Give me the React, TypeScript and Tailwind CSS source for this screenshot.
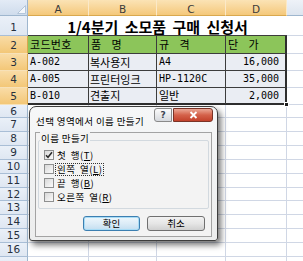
import React from "react";

const KR = "font-['Noto_Sans_CJK_KR',sans-serif]";
const MONO = "font-['DejaVu_Sans_Mono','Noto_Sans_CJK_KR',monospace]";

const colW = ["w-[61px]", "w-[68px]", "w-[69px]", "w-[61px]"];

function RowHdr({ n, sel, h, bottom }: { n: number | null; sel?: boolean; h: string; bottom?: boolean }) {
  return (
    <div
      className={`${h} w-[28px] flex-none flex justify-center border-r border-b text-[10.5px] leading-none text-[#27303d] font-['DejaVu_Sans','Liberation_Sans',sans-serif] ${
        bottom ? "items-end pb-[3px]" : "items-center"
      } ${
        sel
          ? "bg-gradient-to-b from-[#f9dca6] to-[#f3c777] border-r-[#d9a84e] border-b-[#f7e1b8]"
          : "bg-gradient-to-b from-[#eaf0f8] to-[#dfe7f2] border-r-[#9eb6ce] border-b-[#a9bed6]"
      }`}
    >
      {n}
    </div>
  );
}

function EmptyRow({ n, h }: { n: number | null; h: string }) {
  return (
    <div className={`flex ${h}`}>
      <RowHdr n={n} h={h} />
      {colW.map((w, i) => (
        <div key={i} className={`${w} flex-none border-r border-b border-[#d0d7e5]`} />
      ))}
      <div className="flex-1 border-b border-[#d0d7e5]" />
    </div>
  );
}

const data = [
  { a: "A-002", b: "복사용지", c: "A4", cm: true, d: "16,000" },
  { a: "A-005", b: "프린터잉크", c: "HP-1120C", cm: true, d: "35,000" },
  { a: "B-010", b: "견출지", c: "일반", cm: false, d: "2,000" },
];

function Check({ checked }: { checked?: boolean }) {
  return (
    <div className="w-[10px] h-[10px] flex-none border border-[#8e8f8f] bg-gradient-to-br from-[#d8d8d8] to-[#fbfbfb] flex items-center justify-center">
      {checked && (
        <svg width="8" height="8" viewBox="0 0 8 8">
          <path d="M1 4.2 L3 6.3 L7 1.2" fill="none" stroke="#2a2a2a" strokeWidth="1.5" />
        </svg>
      )}
    </div>
  );
}

export default function App() {
  const emptyRows: [number | null, string][] = [
    [6, "h-[13px]"],
    [7, "h-[14px]"],
    [8, "h-[14px]"],
    [9, "h-[14px]"],
    [10, "h-[14px]"],
    [11, "h-[14px]"],
    [12, "h-[13px]"],
    [13, "h-[14px]"],
    [14, "h-[14px]"],
    [15, "h-[14px]"],
    [16, "h-[14px]"],
    [null, "h-[14px]"],
  ];

  return (
    <div className={`relative w-[303px] h-[261px] overflow-hidden bg-white ${KR}`}>
      {/* column header */}
      <div className="flex h-[16px]">
        <div className="w-[28px] flex-none relative bg-gradient-to-b from-[#e3ebf6] to-[#cfdcec] border-r border-b border-[#9eb6ce]">
          <svg className="absolute right-[1px] bottom-[1px]" width="9" height="9" viewBox="0 0 9 9">
            <path d="M8.5 0.5 L8.5 8.5 L0.5 8.5 Z" fill="#f4f7fb" stroke="#b4c6da" strokeWidth="1" />
          </svg>
        </div>
        {["A", "B", "C", "D"].map((l, i) => (
          <div
            key={l}
            className={`${colW[i]} flex-none flex items-end justify-center pb-[1px] text-[10.5px] leading-none text-[#3a3a3a] font-['DejaVu_Sans','Liberation_Sans',sans-serif] bg-gradient-to-b from-[#fbe3b5] to-[#f4c87a] border-r border-r-[#fbe9c8] border-b border-b-[#d9a84e]`}
          >
            {l}
          </div>
        ))}
        <div className="flex-1 bg-gradient-to-b from-[#eef2f8] to-[#dde5ef] border-b border-[#9eb6ce]" />
      </div>

      {/* row 1 */}
      <div className="flex h-[20px]">
        <RowHdr n={1} h="h-[20px]" bottom />
        <div className="w-[259px] flex-none flex items-center justify-center border-b border-[#3c3c3c] bg-white">
          <span className="text-[15px] leading-none font-bold text-black [word-spacing:3px] mt-[2px]">
            1/4분기 소모품 구매 신청서
          </span>
        </div>
        <div className="flex-1 border-b border-[#d0d7e5]" />
      </div>

      {/* row 2 */}
      <div className="flex h-[18px]">
        <RowHdr n={2} h="h-[18px]" sel bottom />
        {["코드번호", "품 명", "규 격", "단 가"].map((t, i) => (
          <div
            key={t}
            className={`${colW[i]} flex-none flex items-center pl-[2px] text-[11px] leading-none text-black bg-[#8cc55a] border-b border-[#3c3c3c] ${
              i === 3 ? "border-r-2 border-r-[#2e2e2e]" : "border-r border-r-[#3c3c3c]"
            } ${i === 0 ? "tracking-[0.3px]" : "[word-spacing:8px]"}`}
          >
            {t}
          </div>
        ))}
        <div className="flex-1 border-b border-[#d0d7e5]" />
      </div>

      {/* rows 3-5 */}
      {data.map((r, ri) => {
        const last = ri === data.length - 1;
        const bb = last ? "border-b-2 border-b-[#2e2e2e]" : "border-b border-b-[#3c3c3c]";
        return (
          <div key={ri} className="flex h-[17px]">
            <RowHdr n={ri + 3} h="h-[17px]" sel />
            <div className={`w-[61px] flex-none flex items-center pl-[2px] text-[10px] leading-none text-black bg-[#eaedf3] border-r border-r-[#3c3c3c] ${bb} ${MONO}`}>
              {r.a}
            </div>
            <div className={`w-[68px] flex-none flex items-center pl-[1px] text-[11px] leading-none text-black bg-[#eaedf3] border-r border-r-[#3c3c3c] ${bb}`}>
              {r.b}
            </div>
            <div
              className={`w-[69px] flex-none flex items-center pl-[2px] leading-none text-black bg-[#eaedf3] border-r border-r-[#3c3c3c] ${bb} ${
                r.cm ? `text-[10px] ${MONO}` : "text-[11px]"
              }`}
            >
              {r.c}
            </div>
            <div className={`w-[61px] flex-none flex items-center justify-end pr-[6px] text-[10px] leading-none text-black bg-[#eaedf3] border-r-2 border-r-[#2e2e2e] ${bb} ${MONO}`}>
              {r.d}
            </div>
            <div className="flex-1 border-b border-[#d0d7e5]" />
          </div>
        );
      })}

      {emptyRows.map(([n, h], i) => (
        <EmptyRow key={i} n={n} h={h} />
      ))}

      {/* fill handle */}
      <div className="absolute left-[284px] top-[102px] w-[5px] h-[5px] bg-[#1e1e1e] border border-white" />

      {/* dialog */}
      <div className="absolute left-[29px] top-[106px] w-[189px] h-[135px] rounded-t-[7px] rounded-b-[3px] border border-[#3d3d3d] bg-gradient-to-b from-[#f6f7f8] to-[#eceded] shadow-[3px_4px_6px_rgba(0,0,0,0.55)] flex flex-col">
        <div className="h-[25px] flex-none flex items-start justify-between pl-[6px] pr-[4px]">
          <span className="mt-[8px] text-[9.5px] leading-[12px] text-black tracking-[0.4px]">선택 영역에서 이름 만들기</span>
          <div className="mt-[1px] flex gap-[1px]">
            <div className="w-[18px] h-[14px] rounded-l-[3px] border border-[#8a8a8a] bg-gradient-to-b from-[#fbfbfb] to-[#d6d9de] flex items-center justify-center text-[9px] leading-none font-bold text-[#3c4450] font-['DejaVu_Sans',sans-serif]">
              ?
            </div>
            <div className="w-[40px] h-[14px] rounded-r-[3px] border border-[#7b3326] bg-gradient-to-b from-[#eaa896] via-[#d4614a] to-[#c2412a] flex items-center justify-center">
              <svg width="9" height="8" viewBox="0 0 9 8">
                <path d="M1.5 1 L7.5 7 M7.5 1 L1.5 7" stroke="#ffffff" strokeWidth="1.8" />
              </svg>
            </div>
          </div>
        </div>
        <div className="mx-[5px] mb-[3px] flex-1 border border-[#a3a3a3] bg-[#f3f3f3] flex flex-col pl-[2px] pr-[6px]">
          <div className="mt-[7px] w-[171px] h-[69px] border border-[#d2d9df] rounded-[2px] flex flex-col pl-[5px]">
            <div className="-mt-[9px] -ml-[4px] self-start px-[1px] bg-[#f3f3f3] text-[9.5px] leading-[12px] text-black tracking-[0.4px]">
              이름 만들기
            </div>
            <div className="mt-[4px] flex flex-col">
              {[
                { k: "첫 행", u: "T", c: true },
                { k: "왼쪽 열", u: "L", f: true },
                { k: "끝 행", u: "B" },
                { k: "오른쪽 열", u: "R" },
              ].map((it) => (
                <div key={it.u} className="h-[14px] flex items-center gap-[2px]">
                  <Check checked={it.c} />
                  <span
                    className={`text-[9.5px] leading-[11px] text-black tracking-[0.5px] [word-spacing:2px] px-[1px] ${
                      it.f ? "outline outline-1 outline-dotted outline-[#333]" : ""
                    }`}
                  >
                    {it.k}(<span className="underline">{it.u}</span>)
                  </span>
                </div>
              ))}
            </div>
          </div>
          <div className="mt-[7px] flex justify-end gap-[7px]">
            <div className="w-[57px] h-[15px] rounded-[3px] border border-[#3c7fb1] bg-gradient-to-b from-[#eef7fc] via-[#dcecf7] to-[#c3def0] shadow-[inset_0_0_0_1px_#a8dcf6] flex items-center justify-center text-[9.5px] leading-none text-black">
              확인
            </div>
            <div className="w-[58px] h-[15px] rounded-[3px] border border-[#707070] bg-gradient-to-b from-[#f2f2f2] via-[#e6e6e6] to-[#d0d0d0] flex items-center justify-center text-[9.5px] leading-none text-black">
              취소
            </div>
          </div>
        </div>
      </div>
    </div>
  );
}
